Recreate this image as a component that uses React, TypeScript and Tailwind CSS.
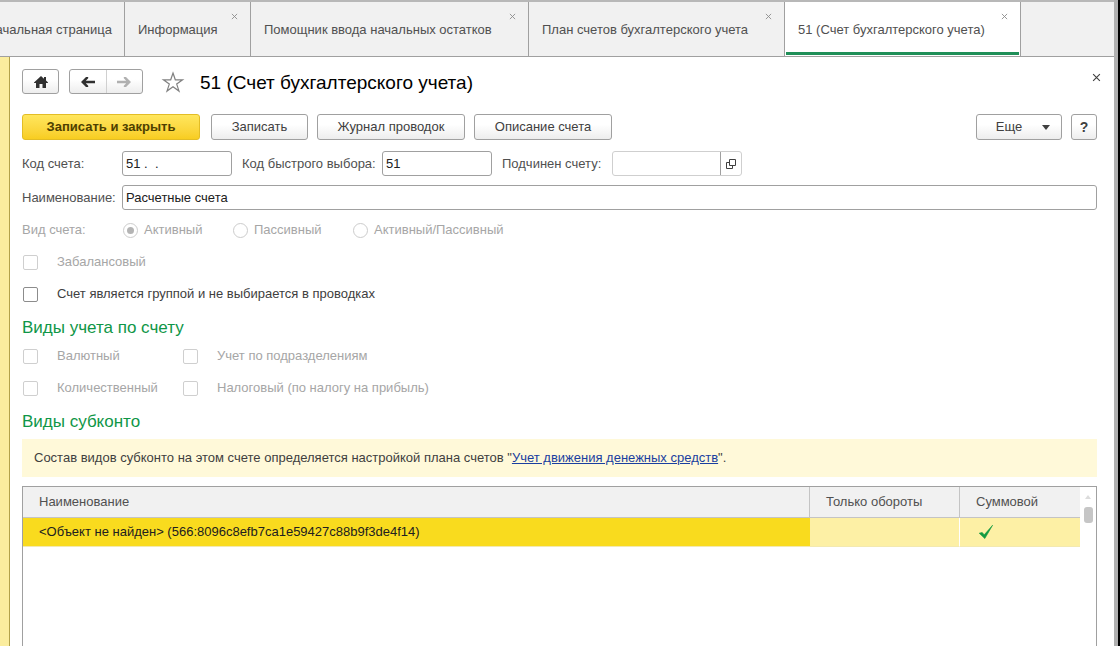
import React, { useState } from "react";
import clsx from "clsx";

const tabs = [
  { title: "Информация", width: "w-[126px]", active: false },
  { title: "Помощник ввода начальных остатков", width: "w-[278px]", active: false },
  { title: "План счетов бухгалтерского учета", width: "w-[256px]", active: false },
  { title: "51 (Счет бухгалтерского учета)", width: "w-[236px]", active: true },
];

const CrossIcon: React.FC<{ className?: string }> = ({ className }) => (
  <svg viewBox="0 0 8 8" className={className} fill="none" stroke="currentColor">
    <path d="M1 1l6 6M7 1L1 7" />
  </svg>
);

const ArrowIcon: React.FC<{ className?: string }> = ({ className }) => (
  <svg viewBox="0 0 14 12" className={className} fill="currentColor">
    <path d="M0 6L5 1h2.2v1.2L4.8 4.7H14v2.6H4.8l2.4 2.5V11H5z" />
  </svg>
);

interface PushButtonProps {
  className?: string;
  label?: string;
  children: React.ReactNode;
}

const PushButton: React.FC<PushButtonProps> = ({ className, label, children }) => (
  <button
    type="button"
    aria-label={label}
    className={clsx(
      "flex shrink-0 items-center justify-center rounded-[3px] border border-[#a0a0a0] bg-linear-to-b from-white from-40% to-[#ededed]",
      className
    )}
  >
    {children}
  </button>
);

interface CheckFieldProps {
  label: string;
  disabled?: boolean;
}

const CheckField: React.FC<CheckFieldProps> = ({ label, disabled }) => (
  <label
    className={clsx(
      "flex h-8 items-center gap-[19px] pl-px",
      disabled ? "text-[#a6a6a6]" : "text-[#404040]"
    )}
  >
    <input
      type="checkbox"
      disabled={disabled}
      className={clsx(
        "size-[15px] shrink-0 appearance-none rounded-[2px] border bg-white checked:bg-[#404040]",
        disabled ? "border-[#cfcfcf]" : "border-[#8c8c8c]"
      )}
    />
    {label}
  </label>
);

interface RadioFieldProps {
  label: string;
  checked?: boolean;
  className?: string;
}

const RadioField: React.FC<RadioFieldProps> = ({ label, checked, className }) => (
  <label className={clsx("flex items-center gap-1.5 pl-px", className)}>
    <input
      type="radio"
      name="kind"
      disabled
      defaultChecked={checked}
      className="size-[15px] shrink-0 appearance-none rounded-full border border-[#cccccc] bg-white bg-clip-content p-[3px] checked:bg-[#b4b4b4]"
    />
    {label}
  </label>
);

const TabBar: React.FC = () => (
  <nav className="flex h-[57px] shrink-0 border-t-2 border-b border-t-[#b8b8b8] border-b-[#a0a0a0] bg-[#f1f1f1] text-[#505050]">
    <button
      type="button"
      className="flex w-[125px] shrink-0 items-center justify-end overflow-hidden border-r border-[#a0a0a0] pt-0.5 pr-3 whitespace-nowrap"
    >
      Начальная страница
    </button>
    {tabs.map((tab) => (
      <div
        key={tab.title}
        className={clsx(
          "relative flex shrink-0 border-r border-[#a0a0a0]",
          tab.width,
          tab.active && "bg-white px-px pb-px"
        )}
      >
        <button
          type="button"
          className={clsx(
            "flex-1 text-left whitespace-nowrap",
            tab.active ? "border-b-[3px] border-[#1f8f58] pt-1.5 pl-3" : "pt-0.5 pl-[13px]"
          )}
        >
          {tab.title}
        </button>
        <button
          type="button"
          aria-label="Закрыть вкладку"
          className="absolute top-[11px] right-3 text-[#8a8a8a]"
        >
          <CrossIcon className="size-[7px]" />
        </button>
      </div>
    ))}
  </nav>
);

const HeaderRow: React.FC = () => (
  <header className="flex h-[25px] items-center">
    <PushButton label="Начальная страница" className="h-[25px] w-[37px] text-[#303030]">
      <svg viewBox="0 0 14 12" className="h-3 w-3.5" fill="currentColor">
        <path d="M7 0L0 6.5V7h2v5h3.5V8h3v4H12V7h2v-.5l-2-1.9V1h-2v1.8z" />
      </svg>
    </PushButton>
    <div className="ml-2.5 flex h-[25px] w-[74px] rounded-[3px] border border-[#a0a0a0] bg-linear-to-b from-white from-40% to-[#ededed]">
      <button
        type="button"
        aria-label="Назад"
        className="flex flex-1 items-center justify-center border-r border-[#d0d0d0] text-[#303030]"
      >
        <ArrowIcon className="h-3 w-3.5" />
      </button>
      <button
        type="button"
        aria-label="Вперед"
        disabled
        className="flex flex-1 items-center justify-center text-[#b0b0b0]"
      >
        <ArrowIcon className="h-3 w-3.5 rotate-180" />
      </button>
    </div>
    <button type="button" aria-label="В избранное" className="ml-[18px] text-[#808080]">
      <svg
        viewBox="0 0 24 24"
        className="size-6"
        fill="none"
        stroke="currentColor"
        strokeWidth="1.2"
      >
        <path d="M12 3l2.3 6.8h7.3l-5.9 4.3 2.3 7-6-4.3-6 4.3 2.3-7-5.9-4.3h7.3z" />
      </svg>
    </button>
    <h1 className="ml-[15px] pt-0.5 text-[19px] text-black">51 (Счет бухгалтерского учета)</h1>
    <button type="button" aria-label="Закрыть" className="mr-[-4px] mb-2 ml-auto text-[#404040]">
      <CrossIcon className="size-[9px]" />
    </button>
  </header>
);

const CommandBar: React.FC = () => (
  <div className="mt-5 flex h-[26px] text-[#404040]">
    <button
      type="button"
      className="w-[178px] rounded-[3px] border border-[#e3bd25] bg-linear-to-b from-[#ffe65c] to-[#f8cd1f] font-bold text-[#4d4000]"
    >
      Записать и закрыть
    </button>
    <PushButton className="ml-[11px] w-[97px]">Записать</PushButton>
    <PushButton className="ml-[9px] w-[148px]">Журнал проводок</PushButton>
    <PushButton className="ml-[9px] w-[138px]">Описание счета</PushButton>
    <PushButton className="ml-auto w-[86px] gap-5 pl-2">
      Еще
      <svg viewBox="0 0 8 5" className="h-[5px] w-2" fill="currentColor">
        <path d="M0 0h8L4 5z" />
      </svg>
    </PushButton>
    <PushButton label="Справка" className="ml-[9px] w-[26px] text-sm font-bold">
      ?
    </PushButton>
  </div>
);

const AccountFields: React.FC = () => {
  const [code, setCode] = useState("51 .  .");
  const [quickCode, setQuickCode] = useState("51");
  const [name, setName] = useState("Расчетные счета");

  return (
    <>
      <div className="mt-[11px] flex h-[25px] items-center">
        <label htmlFor="code" className="w-[100px] shrink-0">
          Код счета:
        </label>
        <input
          id="code"
          type="text"
          value={code}
          onChange={(e) => setCode(e.target.value)}
          className="h-full w-[110px] rounded-[3px] border border-[#a0a0a0] px-[3px] text-[#202020]"
        />
        <label htmlFor="quick" className="ml-2.5 w-[140px] shrink-0 whitespace-nowrap">
          Код быстрого выбора:
        </label>
        <input
          id="quick"
          type="text"
          value={quickCode}
          onChange={(e) => setQuickCode(e.target.value)}
          className="h-full w-[110px] rounded-[3px] border border-[#a0a0a0] px-[3px] text-[#202020]"
        />
        <label htmlFor="parent" className="ml-2.5 w-[110px] shrink-0 whitespace-nowrap">
          Подчинен счету:
        </label>
        <div className="flex h-full w-[130px] rounded-[3px] border border-[#cfcfcf]">
          <input id="parent" type="text" readOnly className="min-w-0 flex-1 px-[3px]" />
          <button
            type="button"
            aria-label="Открыть"
            className="flex w-[21px] items-center justify-center border-l border-[#a0a0a0] text-[#404040]"
          >
            <svg viewBox="0 0 10 10" className="size-2.5" fill="none" stroke="currentColor">
              <path d="M3.5 .5h6v6h-6zM3.5 3.5h-3v6h6v-3" />
            </svg>
          </button>
        </div>
      </div>
      <div className="mt-[9px] flex h-[25px] items-center">
        <label htmlFor="name" className="w-[100px] shrink-0">
          Наименование:
        </label>
        <input
          id="name"
          type="text"
          value={name}
          onChange={(e) => setName(e.target.value)}
          className="h-full min-w-0 flex-1 rounded-[3px] border border-[#a0a0a0] px-[3px] text-[#202020]"
        />
      </div>
    </>
  );
};

const SubcontoTable: React.FC = () => (
  <div className="mt-[9px] flex flex-1 items-start border border-b-0 border-[#a0a0a0]">
    <table className="flex-1 table-fixed border-separate border-spacing-0 text-left">
      <colgroup>
        <col />
        <col className="w-[150px]" />
        <col className="w-[120px]" />
      </colgroup>
      <thead className="bg-[#f1f1f1] text-[#505050]">
        <tr className="h-[31px]">
          <th className="border-r border-b border-[#c4c4c4] pl-4 font-normal">Наименование</th>
          <th className="border-r border-b border-[#c4c4c4] pl-4 font-normal">Только обороты</th>
          <th className="border-b border-[#c4c4c4] pl-4 font-normal">Суммовой</th>
        </tr>
      </thead>
      <tbody>
        <tr className="h-[29px] text-[#202020]">
          <td className="border-b border-[#f3e9b0] bg-[#f9db1e] pl-4">
            &lt;Объект не найден&gt; (566:8096c8efb7ca1e59427c88b9f3de4f14)
          </td>
          <td className="border-r border-b border-r-white border-b-[#f3e9b0] bg-[#fdf0a5]" />
          <td className="border-b border-[#f3e9b0] bg-[#fdf0a5] pl-[18px]">
            <svg viewBox="0 0 16 16" className="size-4" role="img" aria-label="Да">
              <path
                d="M1.2 9.2l3-.8 2 2.4L14.6 1.2 6.8 14.6z"
                fill="#129a41"
                stroke="#129a41"
                strokeWidth=".6"
              />
            </svg>
          </td>
        </tr>
      </tbody>
    </table>
    <div className="flex w-4 flex-col items-center pt-2">
      <svg viewBox="0 0 6 4" className="h-1 w-1.5" fill="#dcdcdc">
        <path d="M3 0l3 4H0z" />
      </svg>
      <div className="mt-2 h-4 w-[9px] rounded-[3px] bg-[#c6c6c6]" />
    </div>
  </div>
);

const App: React.FC = () => (
  <div className="flex min-h-screen border-r-2 border-black bg-white font-['Liberation_Sans',Arial,sans-serif] text-[13px] leading-4 text-[#505050]">
    <div className="flex min-w-0 flex-1 flex-col border-r-4 border-[#b0b0b0]">
      <TabBar />
      <div className="flex flex-1">
        <div className="w-2.5 shrink-0 border-r border-[#b3a24a] bg-[#fbed9e]" />
        <main className="flex min-w-0 flex-1 flex-col pt-3 pr-[17px] pl-3">
          <HeaderRow />
          <CommandBar />
          <AccountFields />

          <div
            role="radiogroup"
            aria-labelledby="kind-label"
            className="mt-1 flex h-8 items-center text-[#a6a6a6]"
          >
            <span id="kind-label" className="w-[100px]">
              Вид счета:
            </span>
            <RadioField label="Активный" checked className="w-[110px]" />
            <RadioField label="Пассивный" className="w-[120px]" />
            <RadioField label="Активный/Пассивный" />
          </div>
          <CheckField label="Забалансовый" disabled />
          <CheckField label="Счет является группой и не выбирается в проводках" />

          <h2 className="mt-1.5 text-[17px] leading-6 text-[#0f9647]">Виды учета по счету</h2>
          <div className="grid grid-cols-[160px_1fr]">
            <CheckField label="Валютный" disabled />
            <CheckField label="Учет по подразделениям" disabled />
            <CheckField label="Количественный" disabled />
            <CheckField label="Налоговый (по налогу на прибыль)" disabled />
          </div>

          <h2 className="mt-1.5 text-[17px] leading-6 text-[#0f9647]">Виды субконто</h2>
          <p className="mt-[5px] bg-[#fff9d9] px-3 py-[11px] text-[#404040]">
            Состав видов субконто на этом счете определяется настройкой плана счетов "
            <a href="#policy" className="text-[#1a3fa0] underline">
              Учет движения денежных средств
            </a>
            ".
          </p>
          <SubcontoTable />
        </main>
      </div>
    </div>
  </div>
);

export default App;
